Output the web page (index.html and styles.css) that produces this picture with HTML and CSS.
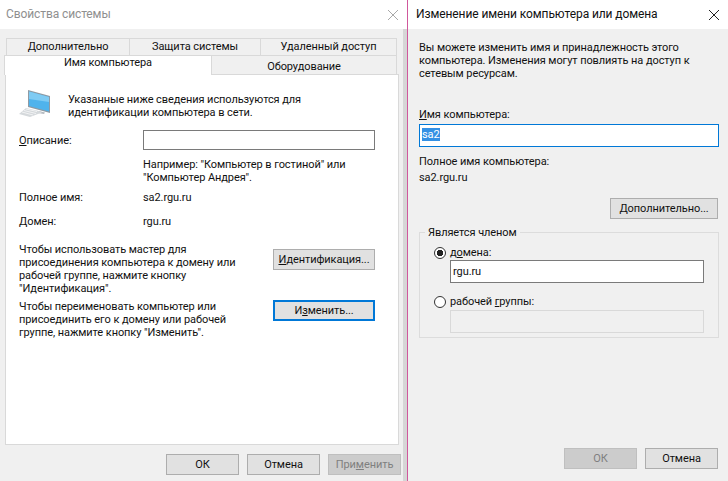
FILE: index.html
```html
<!DOCTYPE html>
<html lang="ru">
<head>
<meta charset="utf-8">
<title>Свойства системы</title>
<link rel="stylesheet" href="styles.css">
</head>
<body>
<div class="desk">
  <section class="win win-left">
    <header class="title title-dim"><span>Свойства системы</span>
      <svg class="close" width="12" height="12" viewBox="0 0 12 12"><path d="M1 1l10 10M11 1L1 11" stroke="#a8a8a8" fill="none"/></svg>
    </header>
    <div class="tabs">
      <div class="tab-row row-back">
        <div class="tab t1">Дополнительно</div>
        <div class="tab t2">Защита системы</div>
        <div class="tab t3">Удаленный доступ</div>
      </div>
      <div class="tab-row row-front">
        <div class="tab active">Имя компьютера</div>
        <div class="tab t5">Оборудование</div>
      </div>
    </div>
    <div class="panel">
      <div class="intro">
        <svg class="pc" width="32" height="32" viewBox="0 0 32 32">
          <path d="M10 2l22 6v17l-22-6z" fill="#8f9aa3"/>
          <path d="M11 3.5l20 5.500v14.500l-20-5.500z" fill="#4fb3ec"/>
          <path d="M11 3.500l20 5.500v5l-20-3z" fill="#7fcbf3"/>
          <path d="M21 23l6 1.500-1 1.500-6-1z" fill="#b4bac0"/>
          <path d="M8 20l13 3 3 1.500L12 29 1 26z" fill="#d5d9dc"/>
          <path d="M8 21l11 2.500M6 22.500l12 3M4 24l11 3" stroke="#f2f3f4" fill="none"/>
        </svg>
        <p class="txt">Указанные ниже сведения используются для<br>идентификации компьютера в сети.</p>
      </div>
      <div class="field">
        <label class="lab"><u>О</u>писание:</label>
        <div class="box"></div>
      </div>
      <p class="txt hint">Например: "Компьютер в гостиной" или<br>"Компьютер Андрея".</p>
      <div class="kv kv-name"><span class="lab">Полное имя:</span><span>sa2.rgu.ru</span></div>
      <div class="kv kv-dom"><span class="lab">Домен:</span><span>rgu.ru</span></div>
      <div class="action a1">
        <p class="txt">Чтобы использовать мастер для<br>присоединения компьютера к домену или<br>рабочей группе, нажмите кнопку<br>"Идентификация".</p>
        <button class="btn btn-wide"><u>И</u>дентификация...</button>
      </div>
      <div class="action a2">
        <p class="txt">Чтобы переименовать компьютер или<br>присоединить его к домену или рабочей<br>группе, нажмите кнопку "Изменить".</p>
        <button class="btn btn-wide focus">И<u>з</u>менить...</button>
      </div>
    </div>
    <footer class="foot foot-left">
      <button class="btn btn-foot">ОК</button>
      <button class="btn btn-foot">Отмена</button>
      <button class="btn btn-foot off">При<u>м</u>енить</button>
    </footer>
  </section>

  <section class="win win-right">
    <header class="title"><span>Изменение имени компьютера или домена</span>
      <svg class="close" width="12" height="12" viewBox="0 0 12 12"><path d="M1 1l10 10M11 1L1 11" stroke="#222" fill="none"/></svg>
    </header>
    <div class="rbody">
      <p class="txt">Вы можете изменить имя и принадлежность этого<br>компьютера. Изменения могут повлиять на доступ к<br>сетевым ресурсам.</p>
      <div class="lab2"><u>И</u>мя компьютера:</div>
      <div class="name-input"><span class="sel">sa2</span></div>
      <div class="full">Полное имя компьютера:</div>
      <div class="full2">sa2.rgu.ru</div>
      <div class="more-row"><button class="btn btn-more"><u>Д</u>ополнительно...</button></div>
      <fieldset class="group">
        <legend>Является членом</legend>
        <div class="radio-row"><span class="radio on"></span><span>д<u>о</u>мена:</span></div>
        <div class="inp">rgu.ru</div>
        <div class="radio-row r2"><span class="radio"></span><span>рабочей <u>г</u>руппы:</span></div>
        <div class="inp dis"></div>
      </fieldset>
    </div>
    <footer class="foot foot-right">
      <button class="btn btn-foot off">ОК</button>
      <button class="btn btn-foot">Отмена</button>
    </footer>
  </section>
</div>
</body>
</html>
```
FILE: styles.css
```css
* { box-sizing: border-box; }
html, body { margin: 0; padding: 0; }
body {
  width: 728px; height: 481px; overflow: hidden; background: #f0f0f0;
  font: 11px/13px Roboto, "Noto Sans", sans-serif; color: #111;
  letter-spacing: -0.08px;
}
p { margin: 0; }
u { text-underline-offset: 1px; }
.desk { display: flex; height: 481px; }
.win { display: flex; flex-direction: column; background: #f0f0f0; height: 481px; }
.win-left {
  width: 407px; flex: none;
  background: linear-gradient(to right, #f0f0f0 403px, #d6d6d6 403px);
}
.win-right { width: 321px; border-left: 1px solid #d0589c; }
.title {
  height: 29px; flex: none; background: #fff; display: flex; align-items: center;
  justify-content: space-between; padding: 0 8px 0 6px; font-size: 12px; letter-spacing: -0.1px;
}
.win-right .title { padding: 0 8px 0 8px; }
.title-dim { color: #8f8f8f; }

.tabs { margin-top: 9px; }
.tab-row { display: flex; }
.row-back { padding-left: 6px; height: 17px; }
.row-front { padding-left: 4px; height: 19px; }
.tab {
  border: 1px solid #d9d9d9; border-bottom: 0; background: #f0f0f0;
  text-align: center; line-height: 15px;
}
.t1 { width: 123px; line-height: 16px; border-right: 0; }
.t2 { width: 131px; line-height: 16px; border-right: 0; }
.t3 { width: 137px; line-height: 16px; }
.active { width: 208px; height: 20px; background: #fff; position: relative; z-index: 1; line-height: 14px; }
.t5 { width: 185px; border-left: 0; line-height: 22px; height: 19px; }

.panel {
  margin-left: 5px; width: 394px; height: 371px; background: #fff;
  border: 1px solid #d9d9d9; padding: 0 23px 0 13px; flex: none;
}
.intro { display: flex; padding-top: 13px; height: 55px; }
.pc { margin-left: -1px; margin-right: 18px; flex: none; }
.intro .txt { padding-top: 5px; }
.field { display: flex; align-items: center; height: 20px; }
.lab { width: 124px; flex: none; display: inline-block; }
.box { width: 233px; height: 20px; background: #fff; border: 1px solid #7a7a7a; }
.hint { margin: 8px 0 0 124px; }
.kv { display: flex; }
.kv-name { margin-top: 7px; }
.kv-dom { margin-top: 11px; }
.action { display: flex; justify-content: space-between; }
.a1 { margin-top: 12px; height: 57px; }
.a2 { height: 40px; }
.btn {
  font: inherit; letter-spacing: inherit; color: #111; background: #e1e1e1;
  border: 1px solid #adadad; padding: 0; height: 21px; display: block;
}
.btn-wide { width: 102px; flex: none; }
.focus { border: 2px solid #0078d7; }
.a1 .txt { margin-top: 3px; }
.a1 .btn { margin-top: 9px; }
.a2 .txt { margin-top: 3px; }
.a2 .btn { margin-top: 3px; }
.foot { display: flex; margin-top: 9px; gap: 8px; }
.foot-left { padding-left: 166px; }
.btn-foot { width: 73px; }
.off { background: #cccccc; border-color: #bfbfbf; color: #7f7f7f; }

.rbody { padding: 12px 9px 0 11px; flex: none; height: 419px; }
.lab2 { margin-top: 28px; }
.name-input {
  width: 300px; height: 23px; margin-top: 3px; background: #fff;
  border: 1px solid #0078d7; padding: 3px 2px; line-height: 13px;
}
.sel { background: #3390e4; color: #fff; display: inline-block; height: 13px; }
.full { margin-top: 8px; }
.full2 { margin-top: 3px; }
.more-row { display: flex; justify-content: flex-end; margin-top: 14px; padding-right: 1px; }
.btn-more { width: 108px; }
.group {
  margin: 7px 0 0; padding: 0 14px; width: 300px; height: 112px;
  border: 1px solid #dcdcdc;
}
legend { padding: 0 3px; margin-left: -9px; line-height: 13px; }
.radio-row { display: flex; align-items: center; gap: 3px; margin-top: 7px; height: 13px; }
.r2 { margin-top: 12px; }
.radio {
  width: 12px; height: 12px; border-radius: 50%; border: 1px solid #333; background: #fff;
  display: block; flex: none; margin-right: 1px;
}
.on { background: radial-gradient(circle, #222 3px, #fff 3.5px); }
.inp {
  margin: 1px 0 0 16px; width: 254px; height: 23px; background: #fff; border: 1px solid #7a7a7a;
  line-height: 19px; padding: 1px 2px;
}
.dis { background: #f0f0f0; border-color: #d9d9d9; margin-top: 2px; }
.foot-right { justify-content: flex-end; padding-right: 10px; margin-top: 0; }
```
